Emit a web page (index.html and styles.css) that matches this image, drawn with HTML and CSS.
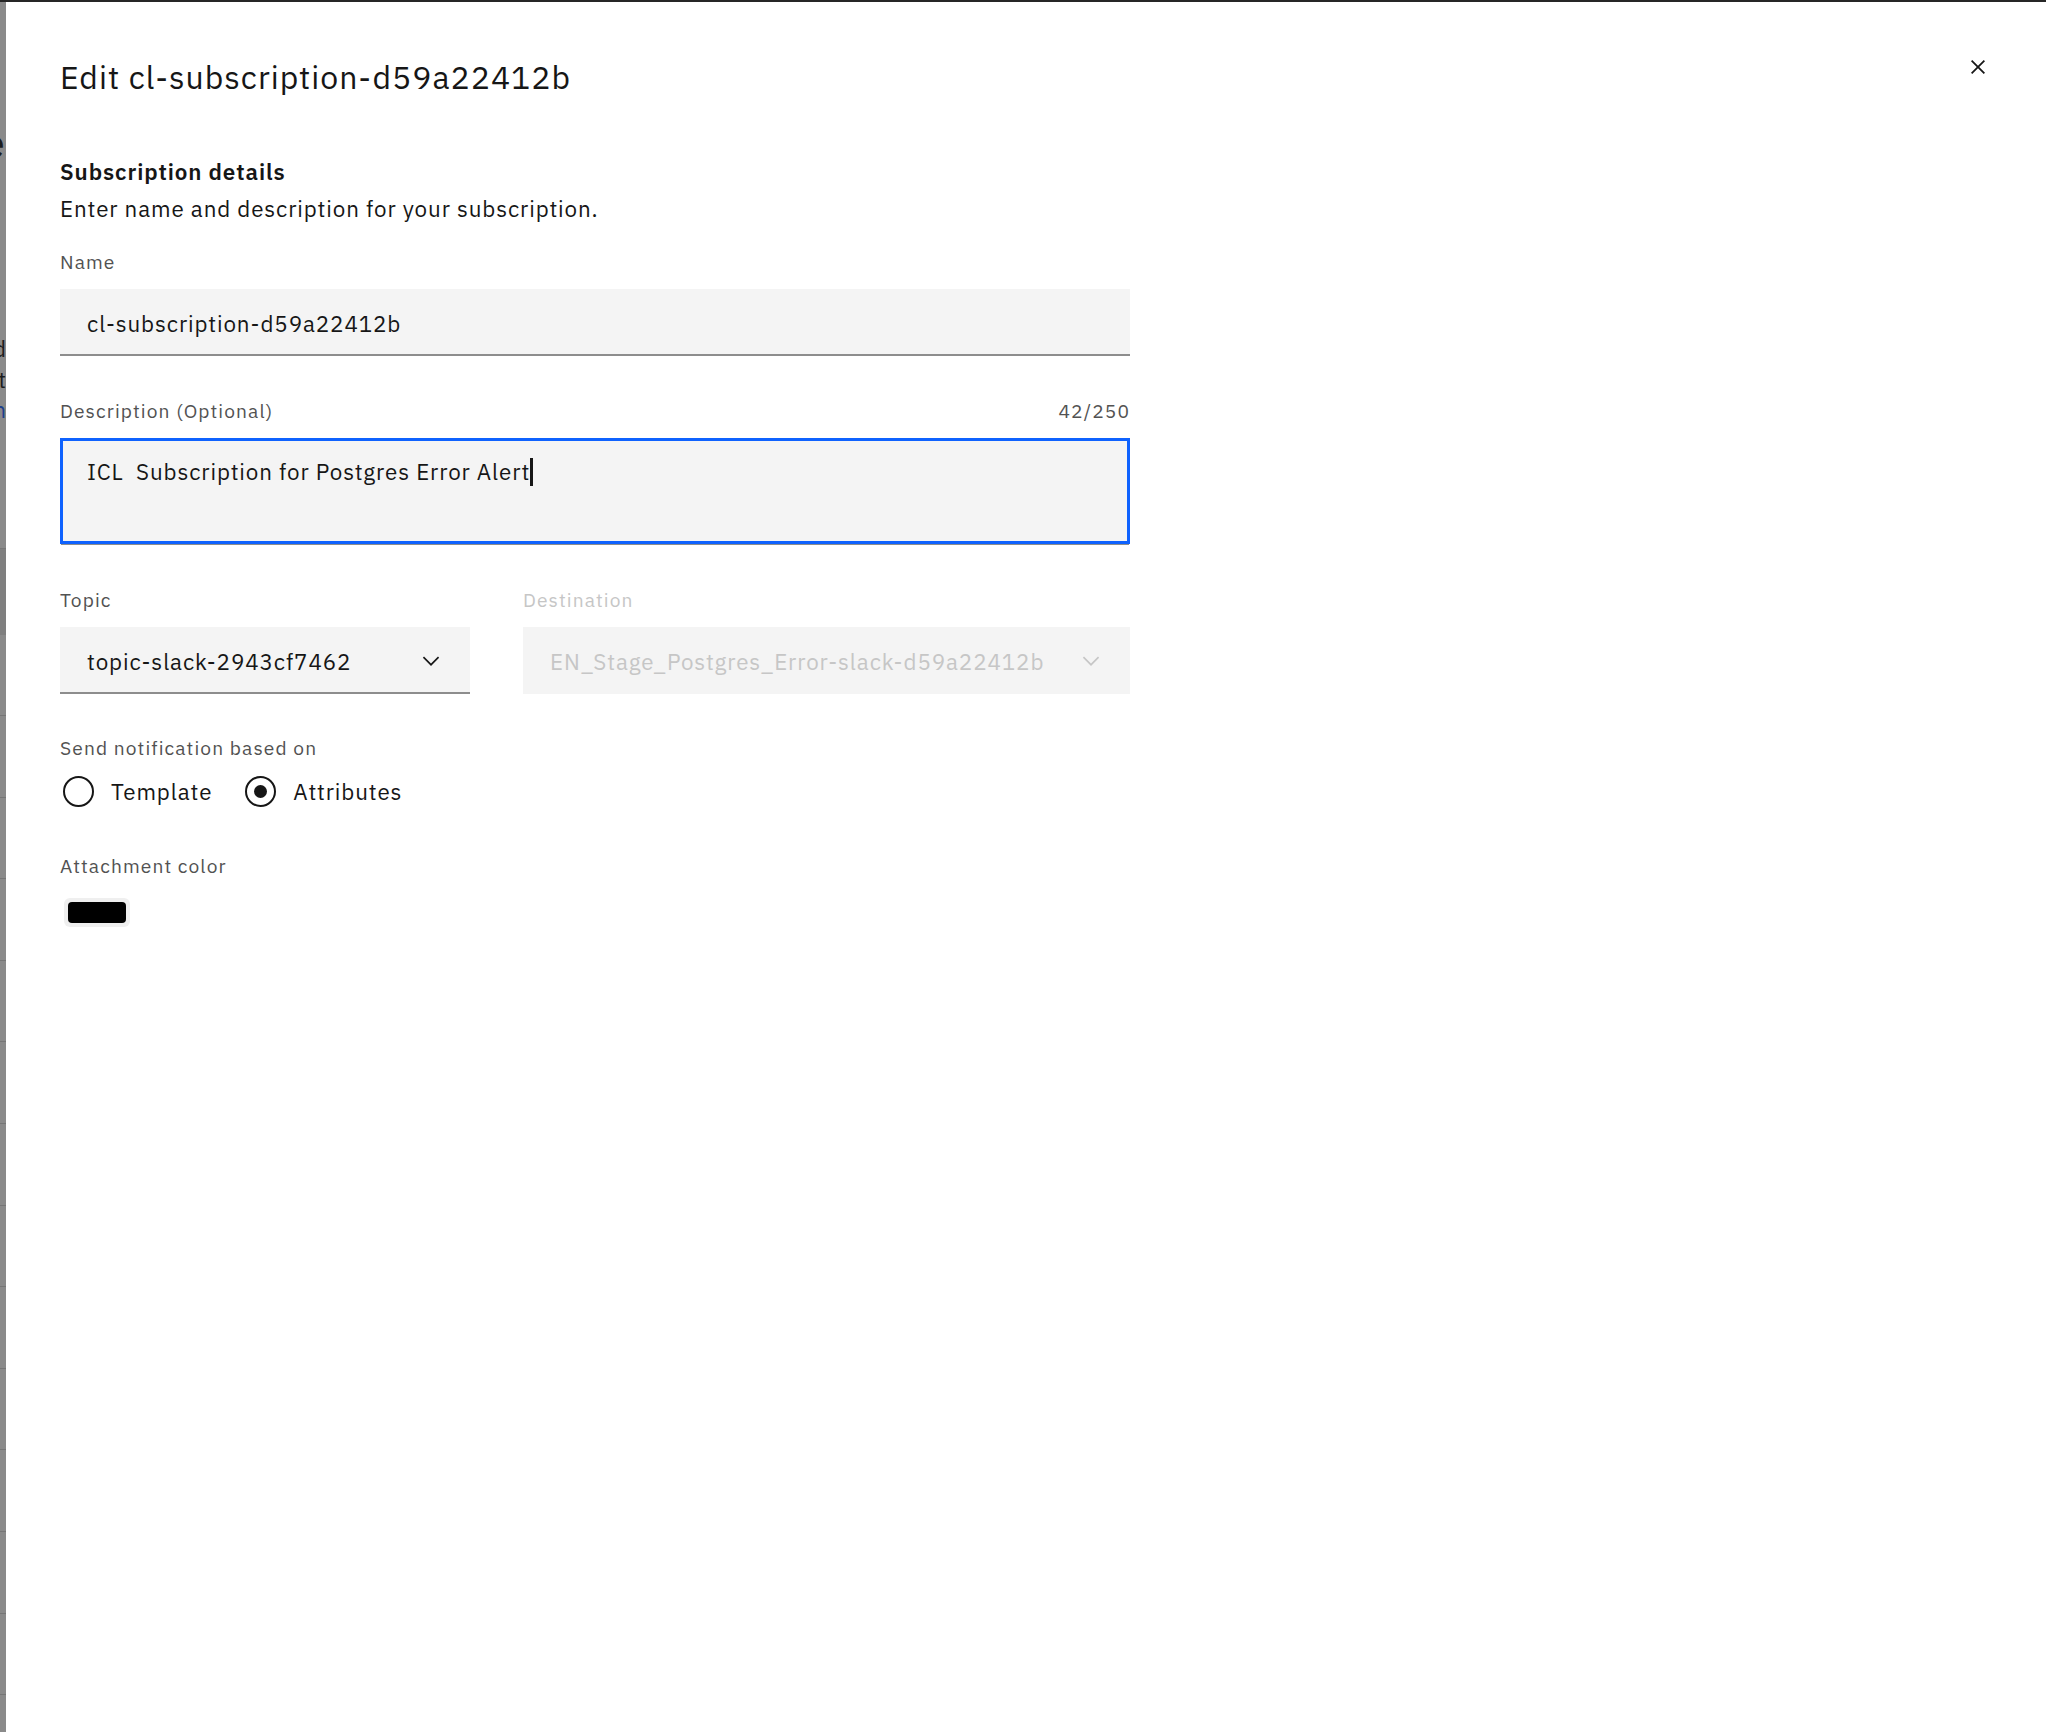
FILE: index.html
```html
<!DOCTYPE html>
<html>
    <head>
        <meta charset="utf-8">
        <link rel="stylesheet" href="styles.css">
    </head>
    <body>
        <div class="page">
            <div class="behind">
                <span class="frag frag-e">e</span>
                <span class="frag frag-d">d</span>
                <span class="frag frag-t">t</span>
                <span class="frag frag-n">n</span>
                <div class="behind-head"></div>
                <div class="behind-rows"></div>
            </div>

            <aside class="panel">
                <button class="close-btn" aria-label="Close">
                    <svg viewBox="0 0 32 32" width="28" height="28"><path d="M17.4141 16L24 9.4141 22.5859 8 16 14.5859 9.4143 8 8 9.4141 14.5859 16 8 22.5859 9.4143 24 16 17.4141 22.5859 24 24 22.5859 17.4141 16z"/></svg>
                </button>

                <h2 class="panel-title">Edit cl-subscription-d59a22412b</h2>

                <div class="form">
                    <h3 class="section-title">Subscription details</h3>
                    <p class="section-desc">Enter name and description for your subscription.</p>

                    <div class="form-item item-name">
                        <label class="field-label">Name</label>
                        <div class="text-input">cl-subscription-d59a22412b</div>
                    </div>

                    <div class="form-item item-desc">
                        <div class="label-row">
                            <label class="field-label">Description (Optional)</label>
                            <span class="counter">42/250</span>
                        </div>
                        <div class="text-area focused"><span class="typed">ICL  Subscription for Postgres Error Alert</span><span class="caret"></span></div>
                    </div>

                    <div class="form-row">
                        <div class="form-item item-topic">
                            <label class="field-label">Topic</label>
                            <div class="dropdown">
                                <span class="dropdown-text">topic-slack-2943cf7462</span>
                                <svg class="chevron" viewBox="0 0 16 16" width="26" height="26"><path d="M8 11L3 6 3.7 5.3 8 9.6 12.3 5.3 13 6z"/></svg>
                            </div>
                        </div>
                        <div class="form-item item-dest disabled">
                            <label class="field-label">Destination</label>
                            <div class="dropdown">
                                <span class="dropdown-text">EN_Stage_Postgres_Error-slack-d59a22412b</span>
                                <svg class="chevron" viewBox="0 0 16 16" width="26" height="26"><path d="M8 11L3 6 3.7 5.3 8 9.6 12.3 5.3 13 6z"/></svg>
                            </div>
                        </div>
                    </div>

                    <div class="form-item item-radios">
                        <label class="field-label">Send notification based on</label>
                        <div class="radio-group">
                            <label class="radio"><span class="radio-circle"></span>Template</label>
                            <label class="radio checked"><span class="radio-circle"></span>Attributes</label>
                        </div>
                    </div>

                    <div class="form-item item-color">
                        <label class="field-label">Attachment color</label>
                        <div class="swatch"><span class="swatch-fill"></span></div>
                    </div>
                </div>
            </aside>
        </div>
    </body>
</html>
```

FILE: styles.css
```css
html, body {
    margin: 0;
    padding: 0;
    background: #fff;
    font-family: "IBM Plex Sans", Inter, "Helvetica Neue", Arial, sans-serif;
    color: #161616;
}
.page {
    display: flex;
    min-height: 1730px;
    border-top: 2px solid #262626;
}
.behind {
    position: relative;
    width: 6px;
    flex-shrink: 0;
    overflow: hidden;
    background: #8a8a8a;
}
.frag {
    position: absolute;
    right: 1px;
    line-height: 1;
    color: #1c1c1c;
}
.frag-e {
    top: 118px;
    font-size: 44px;
}
.frag-d {
    top: 336px;
    right: 0;
    font-size: 22px;
}
.frag-t {
    top: 367px;
    right: 0;
    font-size: 22px;
}
.frag-n {
    top: 397px;
    right: 0;
    font-size: 22px;
    color: #1d3f8c;
}
.behind-head {
    position: absolute;
    left: 0;
    right: 0;
    top: 546px;
    height: 86px;
    background: #7f7f7f;
    border-top: 1px solid #777;
}
.behind-rows {
    position: absolute;
    left: 0;
    right: 0;
    top: 713px;
    bottom: 0;
    background: repeating-linear-gradient(to bottom, #767676 0, #767676 1px, transparent 1px, transparent 81.6px);
}
.panel {
    position: relative;
    flex: 1;
    background: #fff;
    padding: 55px 0 0 54px;
}
.close-btn {
    position: absolute;
    top: 41px;
    right: 44px;
    width: 48px;
    height: 48px;
    padding: 0;
    border: none;
    background: transparent;
    display: flex;
    align-items: center;
    justify-content: center;
}
.close-btn svg {
    fill: #161616;
}
.panel-title {
    margin: 0;
    font-size: 32px;
    line-height: 40px;
    font-weight: 400;
    letter-spacing: 1px;
}
.form {
    width: 1070px;
    margin-top: 60px;
}
.section-title {
    margin: 0;
    font-size: 22.4px;
    line-height: 29px;
    font-weight: 600;
    letter-spacing: 0.9px;
}
.section-desc {
    margin: 7px 0 0 0;
    font-size: 22.4px;
    line-height: 32px;
    letter-spacing: 0.88px;
}
.form-item {
    display: flex;
    flex-direction: column;
}
.item-name {
    margin-top: 24px;
}
.item-desc {
    margin-top: 42px;
}
.form-row {
    display: flex;
    gap: 53px;
    margin-top: 43px;
}
.item-topic {
    width: 410px;
}
.item-dest {
    flex: 1;
}
.item-radios {
    margin-top: 41px;
}
.item-color {
    margin-top: 46px;
}
.field-label {
    font-size: 19.2px;
    line-height: 26px;
    letter-spacing: 1.1px;
    color: #525252;
    margin-bottom: 14px;
}
.label-row {
    display: flex;
    justify-content: space-between;
}
.counter {
    font-size: 19.2px;
    line-height: 26px;
    letter-spacing: 1.1px;
    color: #525252;
}
.text-input, .dropdown {
    box-sizing: border-box;
    height: 67px;
    background: #f4f4f4;
    border-bottom: 2px solid #8d8d8d;
    padding: 3px 26px 0 27px;
    display: flex;
    align-items: center;
    font-size: 22.4px;
    letter-spacing: 0.88px;
}
.text-area {
    box-sizing: border-box;
    height: 106px;
    background: #f4f4f4;
    border: 3px solid #0f62fe;
    box-shadow: 0 2px 0 -1px #8d8d8d;
    padding: 15px 24px 13px 24px;
    font-size: 22.4px;
    line-height: 32px;
    letter-spacing: 0.88px;
    display: flex;
    align-items: flex-start;
}
.typed {
    white-space: pre;
}
.caret {
    display: inline-block;
    width: 3px;
    height: 28px;
    margin-top: 2px;
    background: #161616;
}
.dropdown {
    justify-content: space-between;
    padding-right: 26px;
}
.chevron {
    fill: #161616;
}
.disabled .field-label {
    color: #c6c6c6;
}
.disabled .dropdown {
    border-bottom-color: transparent;
    color: #c6c6c6;
}
.disabled .chevron {
    fill: #c6c6c6;
}
.radio-group {
    display: flex;
    gap: 30px;
    height: 32px;
}
.radio {
    display: flex;
    align-items: center;
    font-size: 22.4px;
    letter-spacing: 0.88px;
    color: #161616;
}
.radio-circle {
    box-sizing: border-box;
    width: 31px;
    height: 31px;
    margin: 0 17px 0 3px;
    border: 2px solid #161616;
    border-radius: 50%;
    display: flex;
    align-items: center;
    justify-content: center;
}
.radio.checked .radio-circle:after {
    content: '';
    width: 13px;
    height: 13px;
    border-radius: 50%;
    background: #161616;
}
.swatch {
    box-sizing: border-box;
    width: 66px;
    height: 29px;
    margin: 5px 0 0 4px;
    padding: 4px;
    background: #efefef;
    border-radius: 6px;
}
.swatch-fill {
    display: block;
    height: 100%;
    border-radius: 4px;
    background: #000;
}
```
